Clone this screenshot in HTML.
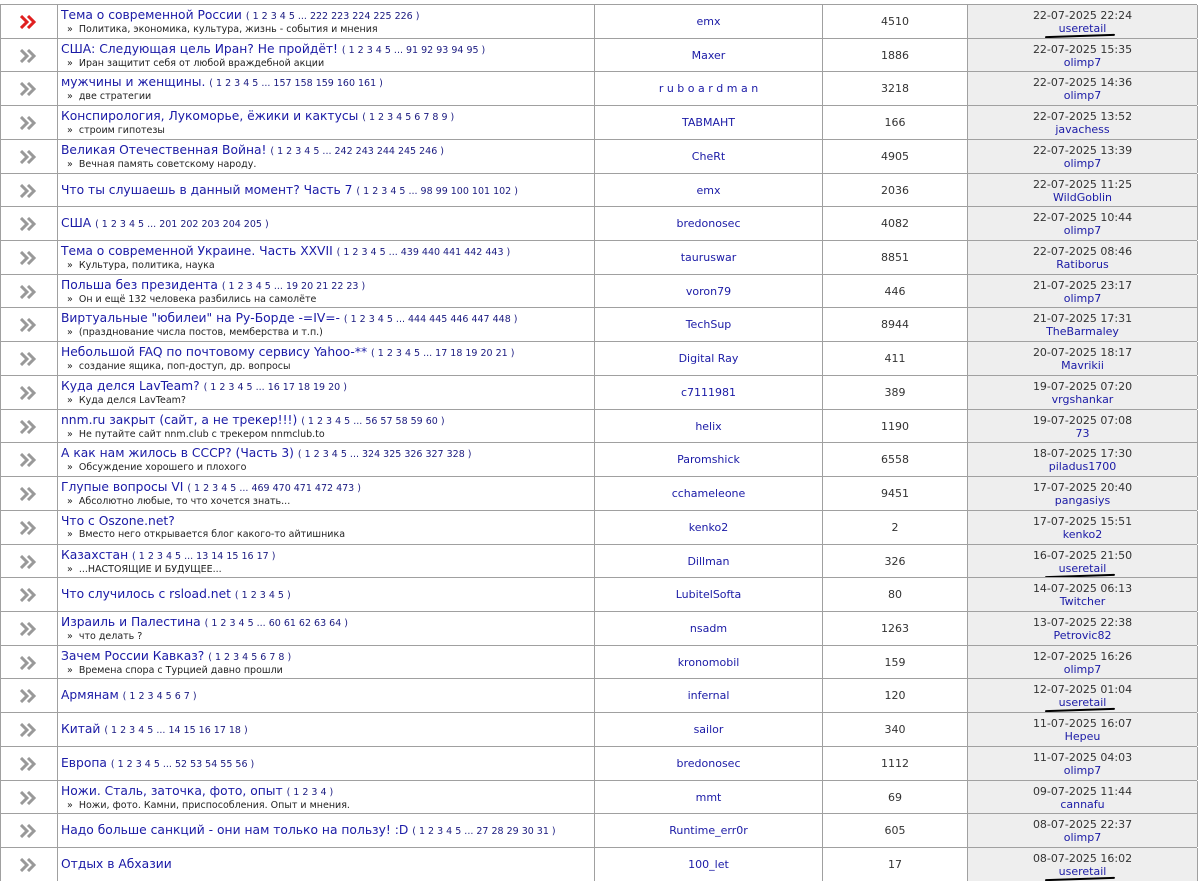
<!DOCTYPE html>
<html><head><meta charset="utf-8"><style>
body{margin:0;background:#fff;font-family:"DejaVu Sans","Liberation Sans",sans-serif;width:1200px;height:877px;overflow:hidden;position:relative}
.r{position:absolute;left:0;width:1197px;height:33px;border-top:1px solid #a0a0a0;}
.c{position:absolute;top:0;height:33px;border-left:1px solid #a0a0a0;}
.i{left:0;width:56px;display:flex;align-items:center;justify-content:center}
.t{left:57px;width:532px;padding-left:3px;display:flex;flex-direction:column;justify-content:center}
.a{left:594px;width:227px;text-align:center;line-height:33px;font-size:11px;color:#1a1aa6}
.n{left:822px;width:144px;text-align:center;line-height:33px;font-size:11px;color:#333}
.l{left:967px;width:229px;background:#eee;border-right:1px solid #a0a0a0;text-align:center;font-size:11px;color:#333;display:flex;flex-direction:column;justify-content:center;line-height:13px}
.l span{color:#1a1aa6}
.tt{font-size:12.3px;color:#1a1aa6;white-space:nowrap;line-height:15px}
.tt small{font-size:9.5px;color:#1a1a80}
.s{font-size:9.5px;color:#222;padding-left:6px;line-height:12px;white-space:nowrap}
.sq{position:absolute;height:2px;background:#000;border-radius:2px}
</style></head><body>
<div id="rows"></div>
<script>
const d=[
["Тема о современной России","1 2 3 4 5 ... 222 223 224 225 226","Политика, экономика, культура, жизнь - события и мнения","emx","4510","22-07-2025 22:24","useretail",1],
["США: Следующая цель Иран? Не пройдёт!","1 2 3 4 5 ... 91 92 93 94 95","Иран защитит себя от любой враждебной акции","Maxer","1886","22-07-2025 15:35","olimp7"],
["мужчины и женщины.","1 2 3 4 5 ... 157 158 159 160 161","две стратегии","r u b o a r d m a n","3218","22-07-2025 14:36","olimp7"],
["Конспирология, Лукоморье, ёжики и кактусы","1 2 3 4 5 6 7 8 9","строим гипотезы","TABMAHT","166","22-07-2025 13:52","javachess"],
["Великая Отечественная Война!","1 2 3 4 5 ... 242 243 244 245 246","Вечная память советскому народу.","CheRt","4905","22-07-2025 13:39","olimp7"],
["Что ты слушаешь в данный момент? Часть 7","1 2 3 4 5 ... 98 99 100 101 102","","emx","2036","22-07-2025 11:25","WildGoblin"],
["США","1 2 3 4 5 ... 201 202 203 204 205","","bredonosec","4082","22-07-2025 10:44","olimp7"],
["Тема о современной Украине. Часть XXVII","1 2 3 4 5 ... 439 440 441 442 443","Культура, политика, наука","tauruswar","8851","22-07-2025 08:46","Ratiborus"],
["Польша без президента","1 2 3 4 5 ... 19 20 21 22 23","Он и ещё 132 человека разбились на самолёте","voron79","446","21-07-2025 23:17","olimp7"],
["Виртуальные \"юбилеи\" на Ру-Борде -=IV=-","1 2 3 4 5 ... 444 445 446 447 448","(празднование числа постов, мемберства и т.п.)","TechSup","8944","21-07-2025 17:31","TheBarmaley"],
["Небольшой FAQ по почтовому сервису Yahoo-**","1 2 3 4 5 ... 17 18 19 20 21","создание ящика, поп-доступ, др. вопросы","Digital Ray","411","20-07-2025 18:17","Mavrikii"],
["Куда делся LavTeam?","1 2 3 4 5 ... 16 17 18 19 20","Куда делся LavTeam?","c7111981","389","19-07-2025 07:20","vrgshankar"],
["nnm.ru закрыт (сайт, а не трекер!!!)","1 2 3 4 5 ... 56 57 58 59 60","Не путайте сайт nnm.club с трекером nnmclub.to","helix","1190","19-07-2025 07:08","73"],
["А как нам жилось в СССР? (Часть 3)","1 2 3 4 5 ... 324 325 326 327 328","Обсуждение хорошего и плохого","Paromshick","6558","18-07-2025 17:30","piladus1700"],
["Глупые вопросы VI","1 2 3 4 5 ... 469 470 471 472 473","Абсолютно любые, то что хочется знать...","cchameleone","9451","17-07-2025 20:40","pangasiys"],
["Что с Oszone.net?","","Вместо него открывается блог какого-то айтишника","kenko2","2","17-07-2025 15:51","kenko2"],
["Казахстан","1 2 3 4 5 ... 13 14 15 16 17","...НАСТОЯЩИЕ И БУДУЩЕЕ...","Dillman","326","16-07-2025 21:50","useretail",2],
["Что случилось с rsload.net","1 2 3 4 5","","LubitelSofta","80","14-07-2025 06:13","Twitcher"],
["Израиль и Палестина","1 2 3 4 5 ... 60 61 62 63 64","что делать ?","nsadm","1263","13-07-2025 22:38","Petrovic82"],
["Зачем России Кавказ?","1 2 3 4 5 6 7 8","Времена спора с Турцией давно прошли","kronomobil","159","12-07-2025 16:26","olimp7"],
["Армянам","1 2 3 4 5 6 7","","infernal","120","12-07-2025 01:04","useretail",2],
["Китай","1 2 3 4 5 ... 14 15 16 17 18","","sailor","340","11-07-2025 16:07","Hepeu"],
["Европа","1 2 3 4 5 ... 52 53 54 55 56","","bredonosec","1112","11-07-2025 04:03","olimp7"],
["Ножи. Сталь, заточка, фото, опыт","1 2 3 4","Ножи, фото. Камни, приспособления. Опыт и мнения.","mmt","69","09-07-2025 11:44","cannafu"],
["Надо больше санкций - они нам только на пользу! :D","1 2 3 4 5 ... 27 28 29 30 31","","Runtime_err0r","605","08-07-2025 22:37","olimp7"],
["Отдых в Абхазии","","","100_let","17","08-07-2025 16:02","useretail",2]];
let h="";
d.forEach((r,k)=>{
const y=Math.round(4+k*33.72);const col=k==0?"#e02020":"#999";
const icon=`<svg width="18" height="14" viewBox="0 0 18 14"><path d="M1 1 L7 7 L1 13 M8 1 L14 7 L8 13" fill="none" stroke="${col}" stroke-width="3"/></svg>`;
h+=`<div class="r" style="top:${y}px">
<div class="c i">${icon}</div>
<div class="c t"><div class="tt">${r[0]}${r[1]?` <small>( ${r[1]} )</small>`:""}</div>${r[2]?`<div class="s">»&nbsp; ${r[2]}</div>`:""}</div>
<div class="c a">${r[3]}</div><div class="c n">${r[4]}</div>
<div class="c l"><div>${r[5]}</div><span>${r[6]}</span></div></div>`;
if(r[7]) h+=`<div class="sq" style="top:${y+31}px;left:1045px;width:70px;transform:rotate(-2deg)"></div>`;
});
document.getElementById("rows").innerHTML=h;
</script>
</body></html>
